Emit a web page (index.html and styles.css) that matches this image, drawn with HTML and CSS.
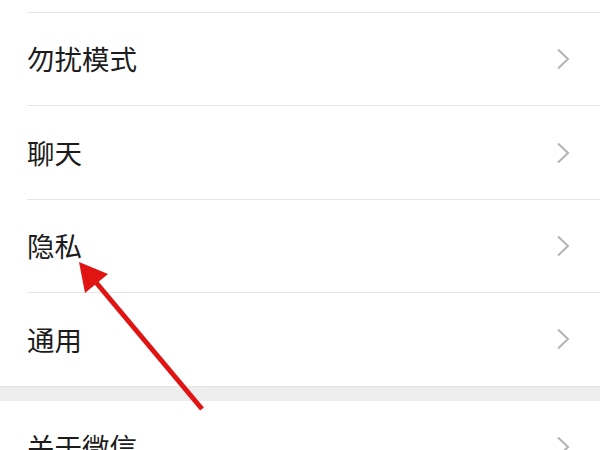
FILE: index.html
```html
<!DOCTYPE html>
<html lang="zh">
<head>
<meta charset="utf-8">
<link rel="stylesheet" href="styles.css">
</head>
<body>
<div class="page">
  <div class="group">
    <div class="top"></div>
    <div class="row"><span class="label">勿扰模式</span><svg class="chev" viewBox="0 0 14 22"><path d="M2 1.5 L12 11 L2 20.5" /></svg></div>
    <div class="row"><span class="label">聊天</span><svg class="chev" viewBox="0 0 14 22"><path d="M2 1.5 L12 11 L2 20.5" /></svg></div>
    <div class="row"><span class="label">隐私</span><svg class="chev" viewBox="0 0 14 22"><path d="M2 1.5 L12 11 L2 20.5" /></svg></div>
    <div class="row last"><span class="label">通用</span><svg class="chev" viewBox="0 0 14 22"><path d="M2 1.5 L12 11 L2 20.5" /></svg></div>
  </div>
  <div class="band"></div>
  <div class="group">
    <div class="row"><span class="label">关于微信</span><svg class="chev" viewBox="0 0 14 22"><path d="M2 1.5 L12 11 L2 20.5" /></svg></div>
  </div>
  <svg class="arrow" viewBox="0 0 600 450">
    <line x1="202" y1="409" x2="94" y2="280" />
    <polygon points="79,262 85,293 108,274" />
  </svg>
</div>
</body>
</html>
```
FILE: styles.css
```css
html, body {
  margin: 0;
  padding: 0;
  background: #ffffff;
}
.page {
  position: relative;
  width: 600px;
  height: 450px;
  overflow: hidden;
  font-family: "Noto Sans CJK SC", "Noto Sans", sans-serif;
}
.group {
  background: #ffffff;
}
.top {
  height: 12px;
  margin-left: 27px;
  border-bottom: 1px solid #e6e6e6;
}
.row {
  display: flex;
  align-items: center;
  justify-content: space-between;
  height: 92.4px;
  margin-left: 27px;
  padding-right: 30px;
  border-bottom: 1px solid #e6e6e6;
}
.row.last {
  border-bottom: none;
}
.label {
  font-size: 27.5px;
  color: #1c1c1c;
  line-height: 1;
  letter-spacing: 0;
}
.chev {
  width: 14px;
  height: 22px;
  display: block;
}
.chev path {
  fill: none;
  stroke: #b3b3b3;
  stroke-width: 2;
}
.band {
  height: 14px;
  background: #ededed;
  border-top: 1px solid #e3e3e3;
}
.arrow {
  position: absolute;
  left: 0;
  top: 0;
  width: 600px;
  height: 450px;
}
.arrow line {
  stroke: #e11414;
  stroke-width: 5;
  stroke-linecap: butt;
}
.arrow polygon {
  fill: #e11414;
}
```
